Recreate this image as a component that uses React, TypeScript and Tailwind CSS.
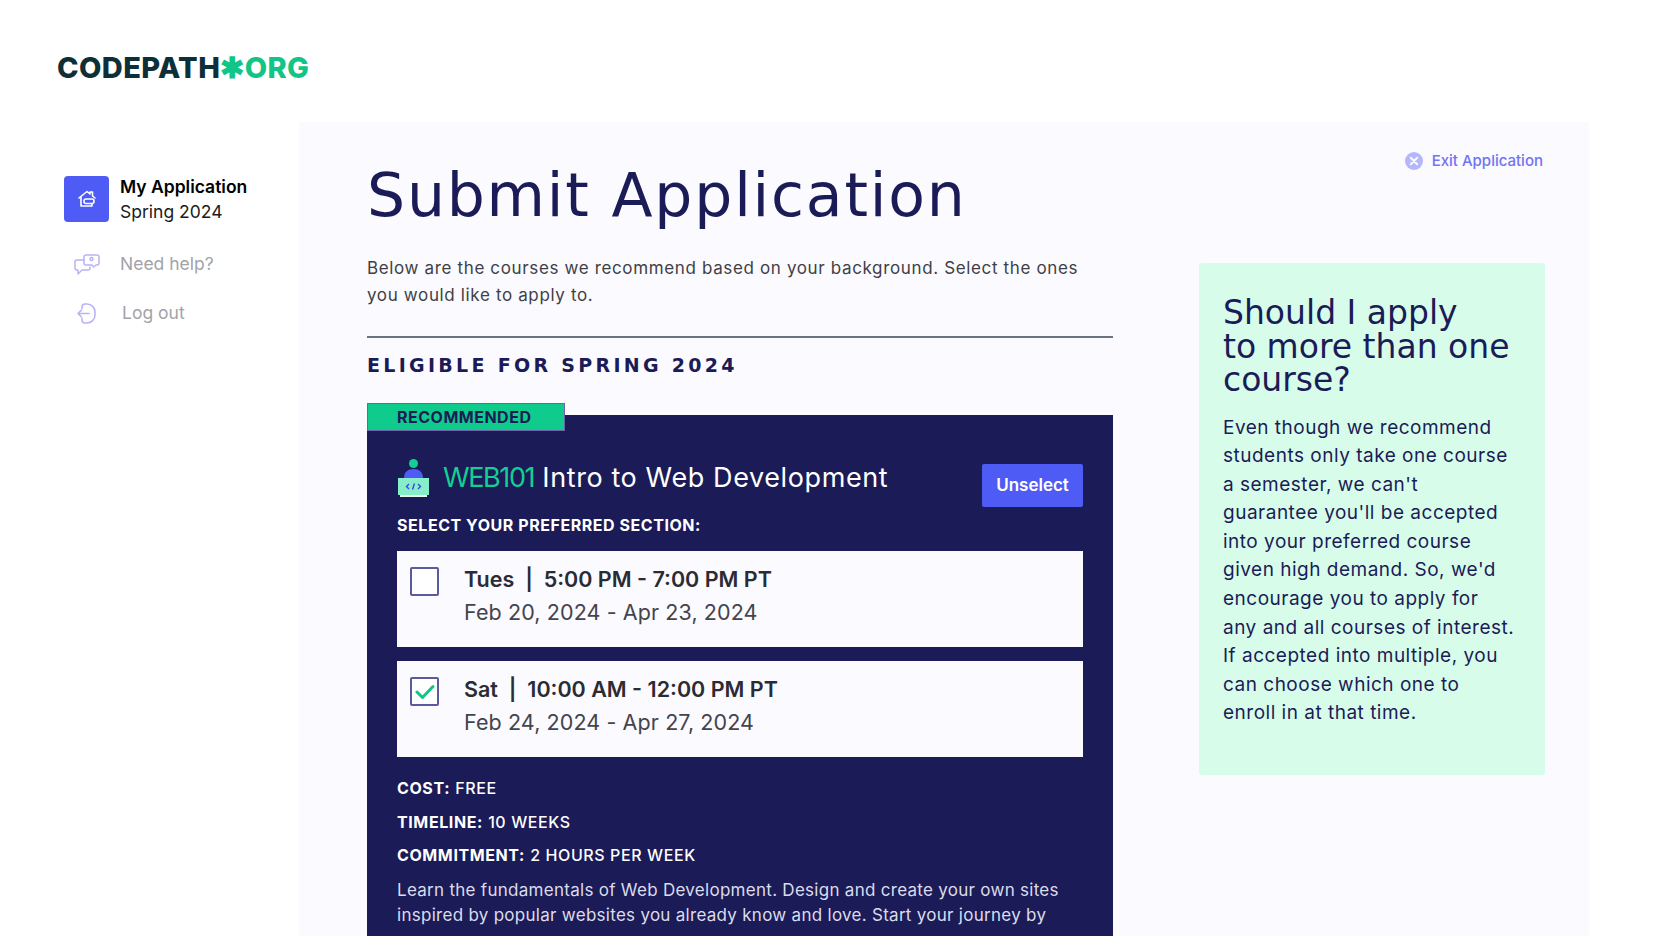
import React from "react";

const body = "font-['Inter','Liberation_Sans',sans-serif]";
const display = "font-['DejaVu_Sans','Liberation_Sans',sans-serif]";

const HomeIcon = () => (
  <svg width="20" height="20" viewBox="0 0 20 20" fill="none" stroke="#fff" strokeWidth="1.6" strokeLinecap="round" strokeLinejoin="round">
    <path d="M2 9 L10 2.5 L13 5 V3 H15.5 V7 L18 9" />
    <path d="M4 8 V17 H15 V15" />
    <rect x="7" y="10" width="10" height="4.5" rx="2" />
  </svg>
);

const HelpIcon = () => (
  <svg width="26" height="21" viewBox="0 0 26 21" fill="none" stroke="#b9b3f5" strokeWidth="1.5" strokeLinecap="round" strokeLinejoin="round">
    <path d="M10 6 H3 a2 2 0 0 0 -2 2 V14 a2 2 0 0 0 2 2 H4 V20 L8 16 H14 a2 2 0 0 0 2 -2 V13" />
    <path d="M12 1 H23 a2 2 0 0 1 2 2 V9 a2 2 0 0 1 -2 2 H22 L19.5 13 L18 11 H12 a2 2 0 0 1 -2 -2 V3 a2 2 0 0 1 2 -2 Z" />
    <circle cx="17.5" cy="5" r="1.5" />
  </svg>
);

const LogoutIcon = () => (
  <svg width="21" height="21" viewBox="0 0 21 21" fill="none" stroke="#b9b3f5" strokeWidth="1.6" strokeLinecap="round" strokeLinejoin="round">
    <path d="M6 5.5 V4 a3 3 0 0 1 3 -3 H11 a8 8 0 0 1 8 8 V12 a8 8 0 0 1 -8 8 H9 a3 3 0 0 1 -3 -3 V15.5" />
    <path d="M13 10.5 H2 M5.5 7 L2 10.5 L5.5 14" />
  </svg>
);

const ExitIcon = () => (
  <svg width="18" height="18" viewBox="0 0 18 18">
    <circle cx="9" cy="9" r="9" fill="#b4b8fb" />
    <path d="M5.8 5.8 L12.2 12.2 M12.2 5.8 L5.8 12.2" stroke="#fafaff" strokeWidth="2" strokeLinecap="round" />
  </svg>
);

const CourseIcon = () => (
  <svg width="33" height="38" viewBox="0 0 33 38">
    <circle cx="16.5" cy="4.5" r="4.5" fill="#14cf93" />
    <path d="M7 19 C7 13 11 10 16.5 10 C22 10 26 13 26 19 Z" fill="#4f5bf5" />
    <rect x="1" y="19" width="31" height="17" fill="#86efc9" />
    <rect x="3" y="36" width="27" height="2" fill="#e5fbf2" />
    <path d="M12 25 L9.5 27.5 L12 30 M21 25 L23.5 27.5 L21 30 M17.5 24.5 L15.5 30.5" fill="none" stroke="#3f46d8" strokeWidth="1.4" />
  </svg>
);

const Section = ({ day, time, dates, checked }: { day: string; time: string; dates: string; checked?: boolean }) => (
  <div className="flex h-[96px] bg-[#fafaff] pl-[13px] pt-[16px]">
    <div className="flex h-[29px] w-[29px] items-center justify-center rounded-[2px] border-2 border-[#5b5a9a] bg-white">
      {checked && (
        <svg width="20" height="16" viewBox="0 0 20 16" fill="none" stroke="#10c586" strokeWidth="3" strokeLinecap="round" strokeLinejoin="round">
          <path d="M2 8 L7.5 13.5 L18 2.5" />
        </svg>
      )}
    </div>
    <div className="ml-[25px] mt-[-4px]">
      <div className="text-[21.5px] leading-[33px] font-semibold text-[#2b2b33] whitespace-pre">
        {day}  |  {time}
      </div>
      <div className="text-[21.5px] leading-[33px] tracking-[0.1px] text-[#44444c]">{dates}</div>
    </div>
  </div>
);

const Fact = ({ label, value }: { label: string; value: string }) => (
  <div className="text-[16px] leading-[33.5px] tracking-[0.6px] text-white uppercase">
    <span className="font-bold">{label}:</span> <span className="font-medium">{value}</span>
  </div>
);

export default function App() {
  return (
    <div className={`${body} flex h-[936px] w-[1656px] flex-col overflow-hidden bg-white`}>
      <header className="flex h-[122px] shrink-0 items-start pl-[57px] pt-[50px]">
        <div className="text-[29px] leading-[36px] font-extrabold tracking-[0.4px] text-[#0d3038]">
          CODEPATH<span className="text-[#10c586]">✱ORG</span>
        </div>
      </header>
      <div className="flex min-h-0 flex-1">
        <aside className="w-[299px] pl-[64px] pt-[52px]">
          <div className="flex items-center">
            <div className="flex h-[46px] w-[45px] items-center justify-center rounded-[4px] bg-[#4f5bf5]">
              <HomeIcon />
            </div>
            <div className="ml-[11px] text-[17.5px] leading-[25px] text-[#1b1b1b]">
              <div className="font-semibold text-black">My Application</div>
              <div>Spring 2024</div>
            </div>
          </div>
          <div className="mt-[27px] flex items-center text-[17.5px] leading-[26px] text-[#a3a3a8]">
            <div className="flex w-[56px] pl-[10px]">
              <HelpIcon />
            </div>
            Need help?
          </div>
          <div className="mt-[23px] flex items-center text-[17.5px] leading-[26px] text-[#a3a3a8]">
            <div className="flex w-[58px] pl-[12px]">
              <LogoutIcon />
            </div>
            Log out
          </div>
        </aside>
        <main className="flex w-[1290px] bg-[#fafaff]">
          <section className="w-[814px] pl-[68px]">
            <h1 className={`${display} mt-[38px] text-[60px] leading-[70px] font-normal tracking-[1.8px] text-[#1b1b57]`}>
              Submit Application
            </h1>
            <p className="mt-[25px] text-[17px] leading-[26.5px] tracking-[0.64px] text-[#3f3f46]">
              Below are the courses we recommend based on your background. Select the ones
              <br />
              you would like to apply to.
            </p>
            <div className="mt-[28px] h-[2px] w-[746px] bg-[#6b7280]" />
            <h2 className={`${display} mt-[14px] text-[19px] leading-[26px] font-bold tracking-[3.3px] text-[#1b1b57]`}>
              ELIGIBLE FOR SPRING 2024
            </h2>
            <div className="mt-[25px] w-[746px]">
              <div className="relative z-10 flex h-[28px] w-[198px] items-center border border-[#6c63a8] bg-[#0fcb8c] pl-[29px] text-[16px] font-bold tracking-[0.5px] text-[#1b1b57]">
                RECOMMENDED
              </div>
              <div className="-mt-[16px] h-[600px] bg-[#1b1b57] px-[30px] pt-[42px]">
                <div className="flex items-start justify-between">
                  <div className="flex items-center pt-[2px]">
                    <CourseIcon />
                    <div className="ml-[13px] text-[27px] leading-[38px] tracking-[0.6px] text-white">
                      <span className="tracking-[-1.4px] text-[#14cf93]">WEB101</span> Intro to Web Development
                    </div>
                  </div>
                  <button className="mt-[7px] flex h-[43px] w-[101px] items-center justify-center rounded-[2px] bg-[#4f5bf5] text-[17px] font-semibold text-white">
                    Unselect
                  </button>
                </div>
                <div className="mt-[6px] text-[16px] leading-[24px] font-bold tracking-[0.55px] text-white">
                  SELECT YOUR PREFERRED SECTION:
                </div>
                <div className="mt-[14px] flex flex-col gap-[14px]">
                  <Section day="Tues" time="5:00 PM - 7:00 PM PT" dates="Feb 20, 2024 - Apr 23, 2024" />
                  <Section day="Sat" time="10:00 AM - 12:00 PM PT" dates="Feb 24, 2024 - Apr 27, 2024" checked />
                </div>
                <div className="mt-[15px]">
                  <Fact label="Cost" value="Free" />
                  <Fact label="Timeline" value="10 weeks" />
                  <Fact label="Commitment" value="2 hours per week" />
                </div>
                <p className="mt-[5px] text-[17px] leading-[25.5px] tracking-[0.28px] text-[#dcdcec]">
                  Learn the fundamentals of Web Development. Design and create your own sites
                  <br />
                  inspired by popular websites you already know and love. Start your journey by
                </p>
              </div>
            </div>
          </section>
          <section className="w-[430px] pl-[86px]">
            <div className="mt-[29px] flex items-center justify-end gap-[9px] text-[15px] leading-[20px] font-medium text-[#6f74f2]">
              <ExitIcon />
              Exit Application
            </div>
            <div className="mt-[92px] h-[512px] w-[346px] rounded-[3px] bg-[#d7fdea] px-[24px] pt-[33px]">
              <h3 className={`${display} text-[33px] leading-[33.5px] font-normal text-[#1b1b57]`}>
                Should I apply
                <br />
                to more than one
                <br />
                course?
              </h3>
              <p className="mt-[17px] text-[19px] leading-[28.6px] tracking-[0.5px] text-[#1b1b57]">
                Even though we recommend
                <br />
                students only take one course
                <br />
                a semester, we can't
                <br />
                guarantee you'll be accepted
                <br />
                into your preferred course
                <br />
                given high demand. So, we'd
                <br />
                encourage you to apply for
                <br />
                any and all courses of interest.
                <br />
                If accepted into multiple, you
                <br />
                can choose which one to
                <br />
                enroll in at that time.
              </p>
            </div>
          </section>
        </main>
      </div>
    </div>
  );
}
